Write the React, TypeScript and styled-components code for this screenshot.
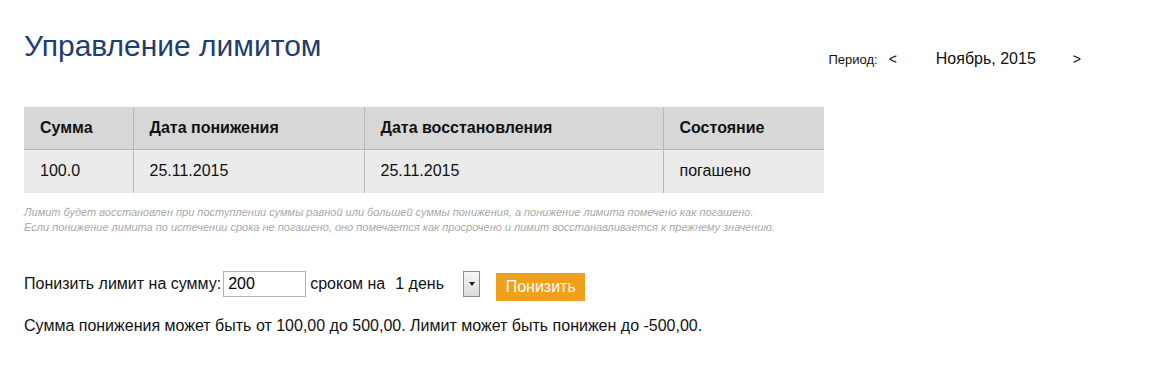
import React, { useState } from 'react';
import styled, { createGlobalStyle } from 'styled-components';

const GlobalStyle = createGlobalStyle`
  body {
    margin: 0;
    background: #ffffff;
    font-family: "Liberation Sans", Arial, sans-serif;
    color: #111;
  }
`;

const Wrapper = styled.div`
  padding: 22px 24px 0 24px;
  width: 1101px;
`;
const Header = styled.div`
  display: flex;
  justify-content: space-between;
  align-items: flex-start;
`;
const Title = styled.h1`
  color: #1d3e70;
  font-size: 30px;
  font-weight: 400;
  margin: 7px 0 0 0;
`;
const Period = styled.div`
  align-items: center;
  display: flex;
  margin: 28px 44px 0 0;
`;
const PeriodLabel = styled.span`
  font-size: 13px;
  margin-right: 11px;
`;
const Arrow = styled.span`
  cursor: pointer;
  font-size: 14px;
`;
const Month = styled.span`
  font-size: 16px;
  margin: 0 37px 0 39px;
`;
const Table = styled.table`
  border-collapse: collapse;
  margin-top: 39px;
  width: 800px;
`;
const Th = styled.th<{ $w: number }>`
  background: #d8d7d8;
  border-left: 1px solid #b8b8b8;
  border-bottom: 1px solid #b8b8b8;
  font-size: 16px;
  font-weight: 700;
  height: 42px;
  padding: 0 16px;
  text-align: left;
  width: ${ p => p.$w }px;
  box-sizing: border-box;

  &:first-child {
    border-left: none;
  }
`;
const Td = styled.td`
  background: #ebebeb;
  border-left: 1px solid #b8b8b8;
  font-size: 16px;
  height: 43px;
  padding: 0 16px;

  &:first-child {
    border-left: none;
  }
`;
const Note = styled.p`
  color: #a9a9a9;
  font-size: 11px;
  font-style: italic;
  line-height: 15px;
  margin: 12px 0 0 0;
`;
const FormRow = styled.div`
  align-items: center;
  display: flex;
  font-size: 16px;
  margin-top: 33px;
`;
const AmountInput = styled.input`
  border: 1px solid #a9b4c2;
  box-sizing: border-box;
  font-family: "Liberation Sans", Arial, sans-serif;
  font-size: 16px;
  height: 26px;
  margin: 0 4px 0 2px;
  padding: 0 4px;
  width: 83px;
  outline: none;
`;
const Select = styled.div`
  align-items: center;
  display: flex;
  margin-left: 10px;
`;
const SelectValue = styled.span`
  width: 68px;
`;
const SelectButton = styled.span`
  align-items: center;
  background: linear-gradient(#f6f6f6, #dcdcdc);
  border: 1px solid #8d8d8d;
  box-sizing: border-box;
  display: flex;
  height: 26px;
  justify-content: center;
  width: 17px;

  &::after {
    border-left: 3px solid transparent;
    border-right: 3px solid transparent;
    border-top: 4px solid #222;
    content: '';
  }
`;
const Button = styled.button`
  background: #f0a01c;
  border: none;
  color: #fff;
  font-family: "Liberation Sans", Arial, sans-serif;
  font-size: 16px;
  height: 28px;
  margin: 5px 0 0 16px;
  padding: 0;
  width: 89px;
`;
const Hint = styled.p`
  font-size: 16px;
  margin: 16px 0 0 0;
`;

const columns = [
  { name: 'Сумма', width: 109 },
  { name: 'Дата понижения', width: 231 },
  { name: 'Дата восстановления', width: 299 },
  { name: 'Состояние', width: 161 }
];
const rows = [
  ['100.0', '25.11.2015', '25.11.2015', 'погашено']
];

export default function App() {
  const [ amount, setAmount ] = useState('200');

  return (
    <Wrapper>
      <GlobalStyle />
      <Header>
        <Title>Управление лимитом</Title>
        <Period>
          <PeriodLabel>Период:</PeriodLabel>
          <Arrow>&lt;</Arrow>
          <Month>Ноябрь, 2015</Month>
          <Arrow>&gt;</Arrow>
        </Period>
      </Header>

      <Table>
        <thead>
          <tr>
            { columns.map(c => <Th key={ c.name } $w={ c.width }>{ c.name }</Th>) }
          </tr>
        </thead>
        <tbody>
          {
            rows.map((r, i) =>
              <tr key={ i }>
                { r.map((v, j) => <Td key={ j }>{ v }</Td>) }
              </tr>
            )
          }
        </tbody>
      </Table>

      <Note>
        Лимит будет восстановлен при поступлении суммы равной или большей суммы понижения, а понижение лимита помечено как погашено.<br />
        Если понижение лимита по истечении срока не погашено, оно помечается как просрочено и лимит восстанавливается к прежнему значению.
      </Note>

      <FormRow>
        Понизить лимит на сумму:
        <AmountInput value={ amount } onChange={ e => setAmount(e.currentTarget.value) } />
        сроком на
        <Select>
          <SelectValue>1 день</SelectValue>
          <SelectButton />
        </Select>
        <Button>Понизить</Button>
      </FormRow>

      <Hint>Сумма понижения может быть от 100,00 до 500,00. Лимит может быть понижен до -500,00.</Hint>
    </Wrapper>
  );
}
